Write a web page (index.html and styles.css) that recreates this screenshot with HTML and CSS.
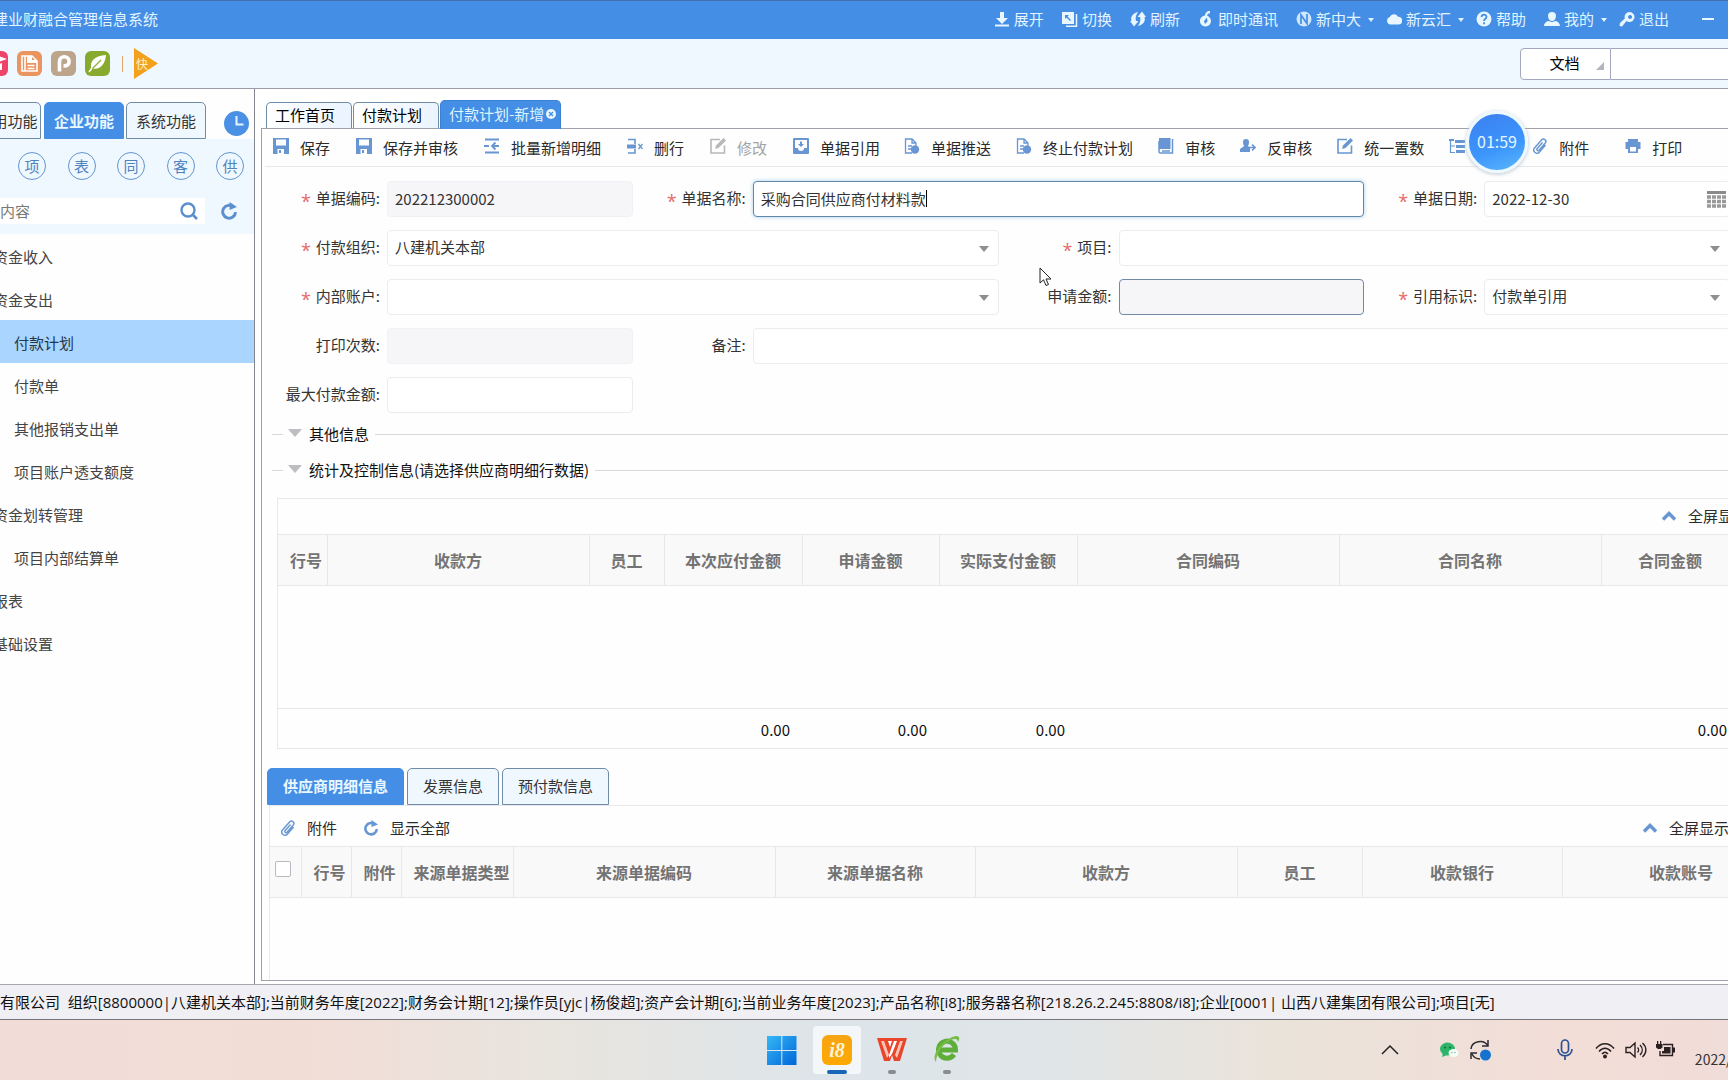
FILE: index.html
```html
<!DOCTYPE html>
<html lang="zh-CN">
<head>
<meta charset="utf-8">
<title>建业财融合管理信息系统</title>
<link rel="stylesheet" href="styles.css">
</head>
<body>
<svg class="sprite" aria-hidden="true">
  <symbol id="i-save" viewBox="0 0 16 16"><path fill="currentColor" fill-rule="evenodd" d="M0 0h16v16H0zM3 1.500v6h10v-6zM4.500 11v5h6.500v-5zM6 12h2v3H6z"/></symbol>
  <symbol id="i-addrow" viewBox="0 0 16 16"><path d="M1 1.500h14M1 14.500h14M0 8h5M15 8H8M11.500 4.500L8 8l3.500 3.500" fill="none" stroke="currentColor" stroke-width="1.800"/></symbol>
  <symbol id="i-delrow" viewBox="0 0 16 16"><path d="M1 1.500h7V6M1 15h7v-4" fill="none" stroke="currentColor" stroke-width="1.600"/><path d="M0 6.500h9v4H0z" fill="currentColor"/><path d="M11.500 6l4 5m0-5l-4 5" stroke="currentColor" stroke-width="1.300"/></symbol>
  <symbol id="i-edit" viewBox="0 0 16 16"><path d="M10 1.500H1V15h13.500V7.500" fill="none" stroke="currentColor" stroke-width="1.600"/><path d="M5 11l1-3.500L13.500 0 16 2.500 8.500 10z" fill="currentColor"/></symbol>
  <symbol id="i-quote" viewBox="0 0 16 16"><path fill="currentColor" fill-rule="evenodd" d="M1 0h14a1 1 0 011 1v14a1 1 0 01-1 1H1a1 1 0 01-1-1V1a1 1 0 011-1zM2 2v8h3a3 3 0 006 0h3V2zM7 3.500h2V6h2L8 9 5 6h2z"/></symbol>
  <symbol id="i-push" viewBox="0 0 16 16"><path d="M8 15H1.500V1H8l4 4v3M8 1v4h4M4 8h4M4 11h3" fill="none" stroke="currentColor" stroke-width="1.300"/><circle cx="11" cy="11.500" r="4.200" fill="currentColor"/></symbol>
  <symbol id="i-book" viewBox="0 0 16 16"><path d="M1 0h11.500v11H1z" fill="currentColor"/><path d="M14.500 1v14H2.500A1.500 1.500 0 011 13.500V3M4 13h8" fill="none" stroke="currentColor" stroke-width="1.500"/></symbol>
  <symbol id="i-back" viewBox="0 0 16 16"><path fill="currentColor" d="M3 4a3 3 0 016 0c0 2-.5 3-1.200 4l2.200 1.500V14H0v-3l4.200-3C3.500 7 3 6 3 4z"/><path d="M8 9.500h7M12 6.500l3 3-3 3" fill="none" stroke="currentColor" stroke-width="1.600"/></symbol>
  <symbol id="i-tree" viewBox="0 0 16 16"><path d="M1.500 1v13.500H6M1.500 8H6" fill="none" stroke="currentColor" stroke-width="1.200"/><path d="M0 1h5v2H0zM6 2h10v3H6zM7 7h9v3H7zM7 12h9v3H7z" fill="currentColor"/></symbol>
  <symbol id="i-clip" viewBox="0 0 16 16"><path d="M13.500 7l-6 7a3.200 3.200 0 01-5-4l7-8a2.400 2.400 0 013.800 3L7 12.300a1.300 1.300 0 01-2-1.600L10.500 4.500" fill="none" stroke="currentColor" stroke-width="1.400"/></symbol>
  <symbol id="i-print" viewBox="0 0 16 16"><path fill="currentColor" fill-rule="evenodd" d="M3 1h10v3h2.500v7H13v4H3v-4H.5V4H3zM5 9v4.500h6V9z"/></symbol>
  <symbol id="i-reload" viewBox="0 0 16 16"><path d="M12 4.500A5.700 5.700 0 1013.800 9" fill="none" stroke="currentColor" stroke-width="2.600"/><path d="M8.500 0l6.500 4.500L8.500 7z" fill="currentColor"/></symbol>
  <symbol id="i-up" viewBox="0 0 16 16"><path d="M2 11.500L8 5.500l6 6" fill="none" stroke="currentColor" stroke-width="3.400"/></symbol>
  <symbol id="h-down" viewBox="0 0 16 16"><path fill="currentColor" d="M6 1h4v6h4l-6 6-6-6h4zM1 13.500h14v2H1z"/></symbol>
  <symbol id="h-switch" viewBox="0 0 16 16"><path fill="currentColor" fill-rule="evenodd" d="M0 1h12v12H0zM3 4v4l1.500-1.500L8 10l1-1-3.500-3.500L7 4z"/><path fill="none" stroke="currentColor" stroke-width="1.500" d="M14.500 3v12.200H4"/></symbol>
  <symbol id="h-refresh" viewBox="0 0 16 16"><path fill="currentColor" d="M8 1C3 2 0 6 1.500 10H0l4 5.500L8.500 10H6C5 7 6 4 8 1zM8 15c5-1 8-5 6.500-9H16L12 .5 7.500 6H10C11 9 10 12 8 15z"/></symbol>
  <symbol id="h-chat" viewBox="0 0 16 16"><path fill="currentColor" fill-rule="evenodd" d="M7.500 4.500a5.500 5.500 0 11-.1 0zM9 6.500l-3 3.500L7 13l2.500-2.500z"/><path d="M8 5c0-2 1.500-4 4-4" fill="none" stroke="currentColor" stroke-width="2.400"/></symbol>
  <symbol id="h-n" viewBox="0 0 16 16"><circle cx="8" cy="8" r="7.500" fill="currentColor" opacity=".85"/><path d="M5 13V4l6 8.500V3" fill="none" stroke="#448ee6" stroke-width="1.700"/></symbol>
  <symbol id="h-cloud" viewBox="0 0 16 16"><path fill="currentColor" d="M4 13.500a3.900 3.900 0 01-.3-7.500A4.700 4.700 0 0112 5.700 3.900 3.900 0 0112.500 13.500z"/></symbol>
  <symbol id="h-help" viewBox="0 0 16 16"><circle cx="8" cy="8" r="7.500" fill="currentColor"/><path d="M5.500 6a2.500 2.500 0 115 .2C10.300 7.800 8 7.800 8 10M8 11.200v2" fill="none" stroke="#448ee6" stroke-width="1.800"/></symbol>
  <symbol id="h-user" viewBox="0 0 16 16"><path fill="currentColor" d="M8 1a4 4 0 014 4c0 3-2 5-4 5S4 8 4 5a4 4 0 014-4zM0 15c0-3 3-5 5-5 2 1.300 4 1.300 6 0 2 0 5 2 5 5z"/></symbol>
  <symbol id="h-key" viewBox="0 0 16 16"><path fill="currentColor" fill-rule="evenodd" d="M10.500 1a5 5 0 11-3 9L3 15.500.5 15 1 12l4.800-4.500A5 5 0 0110.500 1zM11 4a2 2 0 10.100 0z"/></symbol>
</svg>

<header class="titlebar">
  <h1 class="titlebar-name">建业财融合管理信息系统</h1>
  <nav class="titlebar-menu">
    <button class="menu-item"><svg><use href="#h-down"/></svg>展开</button>
    <button class="menu-item"><svg><use href="#h-switch"/></svg>切换</button>
    <button class="menu-item"><svg><use href="#h-refresh"/></svg>刷新</button>
    <button class="menu-item"><svg><use href="#h-chat"/></svg>即时通讯</button>
    <button class="menu-item has-more"><svg><use href="#h-n"/></svg>新中大</button>
    <button class="menu-item has-more"><svg><use href="#h-cloud"/></svg>新云汇</button>
    <button class="menu-item"><svg><use href="#h-help"/></svg>帮助</button>
    <button class="menu-item has-more"><svg><use href="#h-user"/></svg>我的</button>
    <button class="menu-item"><svg><use href="#h-key"/></svg>退出</button>
  </nav>
  <button class="minimize" aria-label="最小化"></button>
</header>

<div class="quickbar">
  <button class="app red" aria-label="教育"><svg viewBox="0 0 25 25"><path fill="#fff" d="M2 8l11-4 11 4-11 4zM7 12l6 2 6-2v7H7z"/></svg></button>
  <button class="app orange" aria-label="文档"><svg viewBox="0 0 25 25"><path d="M5 5v15h15V10l-5-5zM8 5v15M10.500 14.500h7M10.500 17.500h7" fill="none" stroke="#fff" stroke-width="1.600"/><path d="M10 5h5v4h5v3H10z" fill="#fff"/></svg></button>
  <button class="app tan" aria-label="项目"><svg viewBox="0 0 25 25"><path d="M8.500 20.500V10.500a4.800 4.800 0 119.600 0c0 3-2 4.500-5.600 4.500" fill="none" stroke="#fff" stroke-width="3.600"/></svg></button>
  <button class="app green" aria-label="绿色"><svg viewBox="0 0 25 25"><path d="M21 4C10 5 5 9 6 17c7 3 14-2 15-13z" fill="#fff"/><path d="M4 21L16 9" stroke="#8fae32" stroke-width="1.300"/><path d="M4 21l3-4" stroke="#fff" stroke-width="1.500"/></svg></button>
  <span class="quick-sep"></span>
  <button class="fast" aria-label="快捷"><span>快</span></button>
  <div class="finder">
    <button class="finder-kind">文档</button>
    <input class="finder-text" type="text" aria-label="搜索文档">
  </div>
</div>

<div class="workspace">
  <aside class="sidebar">
    <div class="side-tabs">
      <button class="side-tab first">用功能</button>
      <button class="side-tab active">企业功能</button>
      <button class="side-tab">系统功能</button>
      <button class="history" aria-label="历史"><svg viewBox="0 0 25 25"><circle cx="12.500" cy="12.500" r="12.500" fill="#4a90e4"/><path d="M12.500 5v8.500h7" fill="none" stroke="#e6f4ff" stroke-width="2"/></svg></button>
    </div>
    <div class="side-filter">
      <div class="rounds">
        <button>项</button><button>表</button><button>同</button><button>客</button><button>供</button>
      </div>
      <div class="side-search">
        <div class="search-box">
          <input type="text" placeholder="内容" aria-label="搜索内容">
          <svg viewBox="0 0 20 20"><circle cx="9" cy="9" r="6.500" fill="none" stroke="#5b8fce" stroke-width="2.400"/><path d="M13.500 13.500L18 18" stroke="#5b8fce" stroke-width="2.600"/></svg>
        </div>
        <button class="side-reload" aria-label="刷新"><svg><use href="#i-reload"/></svg></button>
      </div>
    </div>
    <ul class="tree">
      <li><a href="#" class="root">资金收入</a></li>
      <li><a href="#" class="root">资金支出</a></li>
      <li><a href="#" class="selected">付款计划</a></li>
      <li><a href="#">付款单</a></li>
      <li><a href="#">其他报销支出单</a></li>
      <li><a href="#">项目账户透支额度</a></li>
      <li><a href="#" class="root">资金划转管理</a></li>
      <li><a href="#">项目内部结算单</a></li>
      <li><a href="#" class="root">报表</a></li>
      <li><a href="#" class="root">基础设置</a></li>
    </ul>
  </aside>

  <main class="main">
    <div class="page-tabs">
      <button class="page-tab">工作首页</button>
      <button class="page-tab">付款计划</button>
      <button class="page-tab active">付款计划-新增<svg viewBox="0 0 10 10"><circle cx="5" cy="5" r="5" fill="#eaf7ff"/><path d="M3 3l4 4m0-4L3 7" stroke="#448ee6" stroke-width="1.400"/></svg></button>
    </div>
    <div class="panel">
      <div class="toolbar">
        <div class="tool-group">
          <button class="tool"><svg><use href="#i-save"/></svg>保存</button>
          <button class="tool"><svg><use href="#i-save"/></svg>保存并审核</button>
          <button class="tool"><svg><use href="#i-addrow"/></svg>批量新增明细</button>
          <button class="tool"><svg><use href="#i-delrow"/></svg>删行</button>
          <button class="tool" disabled><svg><use href="#i-edit"/></svg>修改</button>
          <button class="tool"><svg><use href="#i-quote"/></svg>单据引用</button>
        </div>
        <div class="tool-group tight">
          <button class="tool"><svg><use href="#i-push"/></svg>单据推送</button>
          <button class="tool"><svg><use href="#i-push"/></svg>终止付款计划</button>
          <button class="tool"><svg><use href="#i-book"/></svg>审核</button>
          <button class="tool"><svg><use href="#i-back"/></svg>反审核</button>
          <button class="tool"><svg><use href="#i-edit"/></svg>统一置数</button>
          <button class="tool" aria-label="层级"><svg><use href="#i-tree"/></svg></button>
        </div>
        <div class="tool-group wide">
          <button class="tool"><svg><use href="#i-clip"/></svg>附件</button>
          <button class="tool"><svg><use href="#i-print"/></svg>打印</button>
        </div>
      </div>

      <form class="form">
        <label for="code"><i>*</i>单据编码:</label>
        <div class="field"><input id="code" class="readonly" value="202212300002" readonly></div>
        <label for="name"><i>*</i>单据名称:</label>
        <div class="field span3"><input id="name" class="focused" value="采购合同供应商付材料款"><span class="caret"></span></div>
        <label for="date"><i>*</i>单据日期:</label>
        <div class="field"><input id="date" value="2022-12-30"><svg class="calendar" viewBox="0 0 19 18"><path d="M0 1h19v3H0z" fill="#8a8a8a"/><path d="M0 7h19M0 11.500h19M0 16h19" stroke="#999" stroke-width="3.500" stroke-dasharray="4 1"/></svg></div>

        <label for="org"><i>*</i>付款组织:</label>
        <div class="field combo span3"><select id="org"><option>八建机关本部</option></select></div>
        <label for="project"><i>*</i>项目:</label>
        <div class="field combo span3"><select id="project"><option></option></select></div>

        <label for="account"><i>*</i>内部账户:</label>
        <div class="field combo span3"><select id="account"><option></option></select></div>
        <label for="amount">申请金额:</label>
        <div class="field"><input id="amount" class="readonly outlined" readonly></div>
        <label for="ref"><i>*</i>引用标识:</label>
        <div class="field combo"><select id="ref"><option>付款单引用</option></select></div>

        <label for="prints">打印次数:</label>
        <div class="field"><input id="prints" class="readonly" readonly></div>
        <label for="note">备注:</label>
        <div class="field span5"><input id="note"></div>

        <label for="max">最大付款金额:</label>
        <div class="field"><input id="max"></div>
      </form>

      <h2 class="section"><button>其他信息</button></h2>
      <h2 class="section second"><button>统计及控制信息(请选择供应商明细行数据)</button></h2>

      <section class="grid-box">
        <div class="grid-head"><button class="expand"><svg><use href="#i-up"/></svg>全屏显示</button></div>
        <table class="grid summary">
          <colgroup><col class="w49"><col class="w262"><col class="w75"><col class="w138"><col class="w137"><col class="w138"><col class="w262"><col class="w262"><col class="w138"></colgroup>
          <thead><tr><th>行号</th><th>收款方</th><th>员工</th><th>本次应付金额</th><th>申请金额</th><th>实际支付金额</th><th>合同编码</th><th>合同名称</th><th>合同金额</th></tr></thead>
          <tbody><tr><td colspan="9"></td></tr></tbody>
          <tfoot><tr><td></td><td></td><td></td><td>0.00</td><td>0.00</td><td>0.00</td><td></td><td></td><td>0.00</td></tr></tfoot>
        </table>
      </section>

      <div class="detail-tabs">
        <button class="side-tab active">供应商明细信息</button>
        <button class="side-tab">发票信息</button>
        <button class="side-tab">预付款信息</button>
      </div>
      <section class="detail">
        <div class="detail-bar">
          <button class="tool"><svg><use href="#i-clip"/></svg>附件</button>
          <button class="tool"><svg><use href="#i-reload"/></svg>显示全部</button>
          <button class="expand"><svg><use href="#i-up"/></svg>全屏显示</button>
        </div>
        <table class="grid lines">
          <colgroup><col class="w31"><col class="w50"><col class="w50"><col class="w112"><col class="w262"><col class="w200"><col class="w262"><col class="w125"><col class="w200"><col class="w238"></colgroup>
          <thead><tr><th class="pick"><input type="checkbox" aria-label="全选"></th><th>行号</th><th>附件</th><th>来源单据类型</th><th>来源单据编码</th><th>来源单据名称</th><th>收款方</th><th>员工</th><th>收款银行</th><th>收款账号</th></tr></thead>
        </table>
      </section>
    </div>
    <div class="timer">01:59</div>
  </main>
</div>

<footer class="statusbar">有限公司&nbsp; 组织[8800000|八建机关本部];当前财务年度[2022];财务会计期[12];操作员[yjc|杨俊超];资产会计期[6];当前业务年度[2023];产品名称[i8];服务器名称[218.26.2.245:8808/i8];企业[0001| 山西八建集团有限公司];项目[无]</footer>

<div class="taskbar">
  <div class="dock">
    <button class="dock-app" aria-label="开始"><svg viewBox="0 0 30 30"><defs><linearGradient id="gw" x1="0" y1="0" x2="1" y2="1"><stop offset="0" stop-color="#35b8f7"/><stop offset="1" stop-color="#0065d8"/></linearGradient></defs><path fill="url(#gw)" d="M0 1h14.300v14H0zM15.300 1h14.200v14H15.300zM0 16h14.300v14H0zM15.300 16h14.200v14H15.300z"/></svg></button>
    <button class="dock-app current" aria-label="i8"><span class="i8">i8</span></button>
    <button class="dock-app running" aria-label="WPS"><svg viewBox="0 0 30 30"><path fill="#e8452c" d="M0 3h30l-7 23h-6l-2-6-2 6H7z"/><path fill="#f9c4b4" d="M4 6h3l5 14-2 3zM23 6h3l-6 17-2-3z"/><path fill="#fff" d="M12 20l5-14h3l-5 13-3 4zM11 6h4l-2 6z"/></svg></button>
    <button class="dock-app running" aria-label="浏览器"><svg viewBox="0 0 30 30"><path d="M22 19.500A8.500 8.500 0 1123.500 15H9" fill="none" stroke="#5fae3a" stroke-width="5"/><path d="M4 27C-2 20 12 3 24 1c4-.5 4 3 2 6 0-3-3-4-7-2C10 9 4 20 4 27z" fill="#78bd4a"/></svg></button>
  </div>
  <div class="tray">
    <svg class="t-caret" viewBox="0 0 18 18"><path d="M1 13L9 5l8 8" fill="none" stroke="#222" stroke-width="1.500"/></svg>
    <svg class="t-chat" viewBox="0 0 20 20"><ellipse cx="8.500" cy="9" rx="7.500" ry="6.500" fill="#2fb56a"/><path d="M3 17l1-4 4 2z" fill="#2fb56a"/><circle cx="6" cy="7.500" r="1" fill="#12693a"/><circle cx="11" cy="7.500" r="1" fill="#12693a"/><ellipse cx="14.500" cy="13" rx="5" ry="4" fill="#f4fff6"/><circle cx="13" cy="12.500" r=".7" fill="#7a9"/><circle cx="16" cy="12.500" r=".7" fill="#7a9"/></svg>
    <svg class="t-sync" viewBox="0 0 22 22"><path d="M2 10a9 8 0 0117-3M19 1v6h-6M2 20v-6h6M3 15c2 4 5 5 8 5" fill="none" stroke="#2b2b33" stroke-width="1.500"/><circle cx="16.500" cy="16" r="5.500" fill="#1672cf"/></svg>
    <svg class="t-mic" viewBox="0 0 20 22"><rect x="6.500" y="1" width="7" height="13" rx="3.500" fill="none" stroke="#2d5293" stroke-width="1.700"/><path d="M3 10c0 9 14 9 14 0M10 17v4" fill="none" stroke="#2d5293" stroke-width="1.700"/></svg>
    <svg class="t-wifi" viewBox="0 0 20 20"><path d="M1 8.500c5-6.500 13-6.500 18 0M4 11.500c3.500-4.500 8.500-4.500 12 0M7 14c2-2.500 4-2.500 6 0" fill="none" stroke="#2a2022" stroke-width="1.500"/><circle cx="10" cy="16.500" r="2" fill="#2a2022"/></svg>
    <svg class="t-vol" viewBox="0 0 22 20"><path d="M1 7.500h4l5-4.500v14l-5-4.500H1zM12.500 7.500c1.500 1.500 1.500 3.500 0 5M15 5c3 3 3 7 0 10M17.500 3c4.500 4 4.500 10 0 14" fill="none" stroke="#2a2022" stroke-width="1.400"/></svg>
    <svg class="t-bat" viewBox="0 0 20 20"><path d="M8 4.500h9.500v11H5V11" fill="none" stroke="#2a2022" stroke-width="1.400"/><path d="M9 7h6.500v6.500H7V11h2zM18 7.500h2v5h-2zM1 4h6.500v3.500L5.500 9H3L1 7.500zM2 1h1.300v3H2zM5 1h1.300v3H5z" fill="#2a2022"/></svg>
    <span class="t-date">2022/12/30</span>
  </div>
</div>

<svg class="cursor" viewBox="0 0 13 20"><path d="M1 1v15l3.500-3.200L7 18.500l2.500-1L7 12h5z" fill="#fff" stroke="#222"/></svg>
</body>
</html>
```
FILE: styles.css
```css
* { box-sizing: border-box; }
:root {
  --blue: #448ee6;
  --icon: #6796d2;
  --pale: #eff7ff;
  --rule: #e8e8ec;
  --edge: #6e8ca6;
}
body {
  margin: 0;
  height: 100vh;
  display: flex;
  flex-direction: column;
  overflow: hidden;
  position: relative;
  background: #fff;
  color: #333;
  font: 15px/20px "Noto Sans CJK SC", sans-serif;
}
button, input, select { font: inherit; color: inherit; margin: 0; }
button { border: 0; padding: 0; background: none; white-space: nowrap; }
h1, h2, ul { margin: 0; padding: 0; font-size: inherit; font-weight: 400; list-style: none; }
a { color: inherit; text-decoration: none; }
svg { display: block; flex: none; }
.sprite { position: absolute; width: 0; height: 0; }

/* title bar */
.titlebar {
  flex: none;
  height: 39px;
  display: flex;
  align-items: center;
  padding: 0 14px 2px 0;
  border-top: 1px solid #426fae;
  background: var(--blue);
  color: #e2f5ff;
}
.titlebar-name { margin-left: -7px; white-space: nowrap; }
.titlebar-menu { margin-left: auto; display: flex; gap: 18px; }
.menu-item { display: flex; align-items: center; gap: 4px; }
.menu-item svg { width: 16px; height: 16px; color: #e8f6ff; }
.has-more::after {
  content: "";
  margin: 2px -6px 0 3px;
  border: 3px solid transparent;
  border-top: 4px solid #dff1ff;
  border-bottom: 0;
}
.minimize { width: 12px; height: 2px; margin-left: 33px; background: #e8f6ff; }

/* quick bar */
.quickbar {
  flex: none;
  height: 50px;
  display: flex;
  align-items: center;
  gap: 9px;
  border-bottom: 1px solid #9a9ca6;
  background: var(--pale);
}
.app { width: 25px; height: 25px; border-radius: 6px; overflow: hidden; flex: none; }
.app.red { margin-left: -17px; background: #ee4468; }
.app.orange { background: #ea9460; }
.app.tan { background: #bda58c; }
.app.green { background: #86a92e; }
.quick-sep { width: 1px; height: 16px; margin-left: 3px; background: #e0a860; }
.fast {
  width: 24px;
  height: 31px;
  margin-left: 2px;
  padding-left: 2px;
  background: #f3a01c;
  clip-path: polygon(0 0, 100% 50%, 0 100%);
  color: #fff3c8;
  font-size: 12px;
  text-align: left;
}
.finder { display: flex; margin-left: auto; margin-right: -13px; }
.finder-kind, .finder-text { height: 32px; border: 1px solid #a4a8be; background: #fff; }
.finder-kind {
  position: relative;
  width: 91px;
  padding: 0 2px 2px 0;
  border-radius: 4px 0 0 4px;
  color: #000;
}
.finder-kind::after {
  content: "";
  position: absolute;
  right: 6px;
  bottom: 9px;
  border-left: 8px solid transparent;
  border-bottom: 8px solid #b4b4c0;
}
.finder-text { width: 130px; border-left: 0; }

.workspace { flex: 1; min-height: 0; display: flex; }

/* sidebar */
.sidebar { flex: none; width: 255px; border-right: 1px solid #85858f; background: #fefefe; }
.side-tabs { display: flex; align-items: flex-end; gap: 2px; padding-top: 13px; }
.side-tab {
  height: 37px;
  padding: 0 9px;
  border: 1px solid var(--edge);
  border-radius: 5px 5px 0 0;
  background: var(--pale);
}
.side-tab.active { border-color: var(--blue); background: var(--blue); color: #e8f8ff; font-weight: 700; }
.side-tab.first { width: 52px; margin-left: -11px; padding: 0; margin-right: 1px; }
.history { width: 25px; height: 25px; margin: 0 0 3px 16px; }
.side-filter { background: var(--pale); height: 95px; padding: 13px 10px 0 0; }
.rounds { display: flex; justify-content: space-between; padding: 0 0 0 18px; }
.rounds button {
  width: 28px;
  height: 28px;
  border: 1px solid #6296ce;
  border-radius: 50%;
  color: #4f83be;
  line-height: 24px;
}
.side-search { display: flex; align-items: center; justify-content: space-between; margin-top: 18px; }
.search-box { display: flex; align-items: center; width: 205px; height: 26px; padding-right: 6px; background: #fff; }
.search-box input { flex: 1; min-width: 0; border: 0; padding: 0; background: none; outline: 0; }
.search-box input::placeholder { color: #777; }
.search-box svg { width: 20px; height: 20px; }
.side-reload { color: #5b8fce; margin-right: 6px; }
.side-reload svg { width: 18px; height: 18px; }
.tree a { display: block; height: 43px; padding: 3px 0 0 14px; line-height: 40px; white-space: nowrap; color: #444; }
.tree a.root { padding-left: 0; margin-left: -7px; }
.tree a.selected { background: #aad5ff; color: #24374c; }

/* main area */
.main {
  flex: 1;
  min-width: 0;
  position: relative;
  display: flex;
  flex-direction: column;
  padding: 11px 0 3px 6px;
}
.page-tabs { display: flex; align-items: flex-end; gap: 1px; padding-left: 5px; height: 28px; }
.page-tab {
  height: 26px;
  width: 86px;
  padding: 0 8px 2px;
  text-align: left;
  border: 1px solid var(--edge);
  border-bottom: 0;
  border-radius: 5px 5px 0 0;
  background: linear-gradient(90deg, #fff, #eaf4ff);
  color: #000;
}
.page-tab.active {
  position: relative;
  display: flex;
  align-items: center;
  justify-content: space-between;
  width: 121px;
  height: 29px;
  margin-bottom: -1px;
  border-color: #3c80d4;
  background: var(--blue);
  color: #dff4ff;
}
.page-tab.active svg { width: 10px; height: 10px; margin-right: -4px; }
.panel {
  flex: 1;
  min-height: 0;
  overflow: hidden;
  border: solid #a0a0aa;
  border-width: 1px 0 1px 1px;
  background: #fefefe;
}
.toolbar {
  display: flex;
  gap: 24px;
  height: 38px;
  margin-left: 3px;
  padding: 1px 0 0 8px;
  border-bottom: 1px solid var(--rule);
}
.tool-group { display: flex; gap: 26px; }
.tool-group.tight { gap: 25px; }
.tool-group.wide { gap: 36px; margin-left: 43px; }
.tool, .expand { display: flex; align-items: center; gap: 11px; color: #2a2a2a; }
.tool svg, .expand svg { width: 16px; height: 16px; color: var(--icon); }
.toolbar .tool svg { margin-top: -4px; }
.tool:disabled { color: #a4a4a4; }
.tool:disabled svg { color: #b8b8b8; }
.timer {
  position: absolute;
  right: 200px;
  top: 22px;
  width: 62px;
  height: 62px;
  border: 3px solid #eef8ff;
  border-radius: 50%;
  background: linear-gradient(160deg, #3c7ff0, #3c96fb 60%, #5bb8fb);
  box-shadow: 0 1px 4px #b8c4d0;
  color: #e6f6ff;
  font-size: 16px;
  line-height: 54px;
  text-align: center;
}

/* form */
.form {
  display: grid;
  grid-template-columns: repeat(4, 120px 1fr);
  row-gap: 13px;
  margin: 14px -2px 0 5px;
}
.form label { line-height: 34px; text-align: right; padding-right: 7px; white-space: nowrap; }
.form label i {
  margin-right: 5px;
  color: #e66a6a;
  font: 18px/1px "Open Sans", sans-serif;
  vertical-align: -4px;
}
.field { position: relative; min-width: 0; }
.span3 { grid-column: span 3; }
.span5 { grid-column: span 5; }
.field input, .field select {
  display: block;
  width: 100%;
  height: 36px;
  padding: 0 7px 2px;
  border: 1px solid #ececf0;
  border-radius: 4px;
  background: #fff;
  outline: 0;
  appearance: none;
}
.field input.readonly { background: #f6f5f8; border-color: #f1f0f4; }
.field input.outlined { border-color: #7089a5; }
.field input.focused { border-color: #6089a8; box-shadow: 0 0 4px #a9cdec; }
.combo::after {
  content: "";
  position: absolute;
  right: 10px;
  top: 16px;
  border: 5px solid transparent;
  border-top: 6px solid #8e8e8e;
  border-bottom: 0;
}
.calendar { position: absolute; right: 4px; top: 9px; width: 19px; height: 18px; }
.caret { position: absolute; left: 173px; top: 9px; width: 1px; height: 17px; background: #000; }

/* section rules */
.section { display: flex; align-items: center; height: 20px; margin: 11px 0 0 10px; }
.section.second { margin-top: 16px; }
.section button { display: flex; align-items: center; padding-bottom: 1px; color: #111; }
.section button::before {
  content: "";
  margin: 0 7px 2px 5px;
  border: 7px solid transparent;
  border-top: 8px solid #bdbdc2;
  border-bottom: 0;
}
.section::before { content: ""; width: 11px; height: 1px; background: #d8d8dc; }
.section::after { content: ""; flex: 1; height: 1px; margin-left: 6px; background: #d8d8dc; }

/* grids */
.grid-box { margin: 18px 0 0 15px; border: solid var(--rule); border-width: 1px 0 1px 1px; overflow: hidden; }
.grid-head { display: flex; justify-content: flex-end; height: 35px; margin-right: -20px; }
.grid-head .expand { padding-bottom: 2px; }
.grid { border-collapse: collapse; table-layout: fixed; }
.grid th {
  height: 51px;
  padding: 0 12px;
  border: solid var(--rule);
  border-width: 1px 1px 1px 0;
  background: #f9f9fa;
  color: #737373;
  font-size: 16px;
  font-weight: 700;
  white-space: nowrap;
}
.summary { width: 1461px; }
.lines { width: 1530px; }
.grid td { padding: 0 12px; }
.summary tbody td { height: 123px; }
.summary tfoot td { height: 39px; padding-top: 3px; border-top: 1px solid var(--rule); text-align: right; color: #111; }
.w31 { width: 31px; }
.w49 { width: 49px; }
.w50 { width: 50px; }
.w75 { width: 75px; }
.w112 { width: 112px; }
.w125 { width: 125px; }
.w137 { width: 137px; }
.w138 { width: 138px; }
.w200 { width: 200px; }
.w238 { width: 238px; }
.w262 { width: 262px; }

.detail-tabs { display: flex; gap: 3px; margin: 19px 0 0 5px; }
.detail-tabs .side-tab { padding: 0 15px; height: 37px; }
.detail { margin-left: 7px; border: solid var(--rule); border-width: 1px 0 0 1px; overflow: hidden; height: 100%; }
.detail-bar { display: flex; gap: 26px; height: 40px; padding: 5px 0 0 10px; }
.detail-bar .expand { margin: 0 -1px 0 auto; }
.grid th.pick { padding: 0 0 6px; }
.pick input {
  display: block;
  width: 16px;
  height: 16px;
  margin: 0 auto 0 5px;
  appearance: none;
  border: 1px solid #b8b8c0;
  border-radius: 2px;
  background: #fff;
}

/* status bar and taskbar */
.statusbar {
  flex: none;
  height: 36px;
  border-top: 1px solid #a6a6ae;
  border-bottom: 1px solid #77737a;
  background: #f0eff3;
  color: #111;
  font-family: "Open Sans", "Noto Sans CJK SC", sans-serif;
  line-height: 34px;
  white-space: nowrap;
}
.taskbar {
  flex: none;
  position: relative;
  display: flex;
  justify-content: flex-end;
  align-items: center;
  height: 60px;
  background: linear-gradient(90deg, #f1dcd8, #f2ddd6 17%, #e8e4de 32%, #dde5ea 48%, #dfe5e8 60%, #eae3da 74%, #f3ddd7 92%, #f0dcd8);
}
.dock { position: absolute; left: 758px; top: 6px; display: flex; gap: 7px; }
.dock-app { position: relative; width: 48px; height: 48px; display: grid; place-items: center; border-radius: 4px; }
.dock-app svg { width: 30px; height: 30px; }
.dock-app.current { background: #f4f7fa; }
.i8 {
  width: 30px;
  height: 30px;
  border-radius: 6px;
  background: linear-gradient(#f7a416, #fda900);
  color: #fff4d8;
  font: italic 700 20px/30px "Liberation Serif", serif;
}
.dock-app.current::after, .dock-app.running::after {
  content: "";
  position: absolute;
  left: 20px;
  bottom: 0;
  width: 8px;
  height: 4px;
  border-radius: 2px;
  background: #8a8c90;
}
.dock-app.current::after { left: 14px; width: 20px; background: #1766b8; }
.tray { display: flex; align-items: center; height: 60px; margin-right: -40px; }
.t-caret { width: 18px; height: 18px; margin-right: 40px; }
.t-chat { width: 20px; height: 20px; margin-right: 10px; }
.t-sync { width: 22px; height: 22px; margin-right: 64px; }
.t-mic { width: 20px; height: 22px; margin-right: 20px; }
.t-wifi { width: 20px; height: 20px; margin-right: 10px; }
.t-vol { width: 22px; height: 20px; margin-right: 8px; }
.t-bat { width: 20px; height: 20px; margin-right: 20px; }
.t-date { padding-top: 18px; font-size: 14px; color: #333; }
.cursor { position: absolute; left: 1039px; top: 267px; width: 13px; height: 20px; }
```
